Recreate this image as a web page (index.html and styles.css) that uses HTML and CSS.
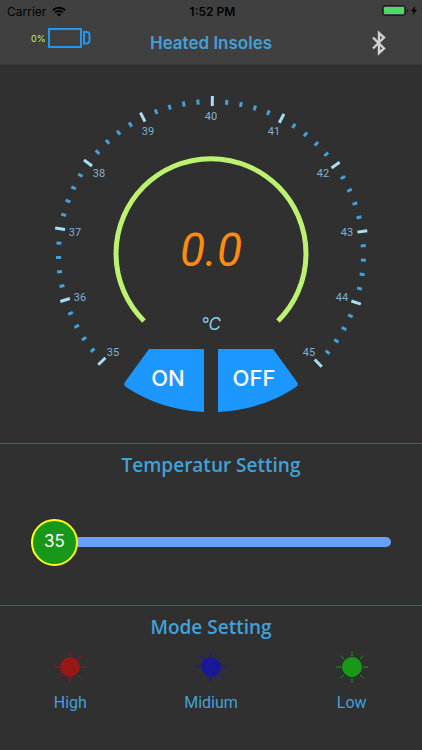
FILE: index.html
```html
<!DOCTYPE html>
<html lang="en">
<head>
    <meta charset="UTF-8">
    <meta name="viewport" content="width=device-width, initial-scale=1.0">
    <title>Heated Insoles</title>
    <link rel="stylesheet" href="styles.css">
</head>
<body>
    <header class="top">
        <div class="status-bar">
            <div class="carrier">
                Carrier
                <svg width="14" height="11" viewBox="0 0 14 11" fill="none" stroke="#000" stroke-width="2">
                    <path d="M1 4.2a8.6 8.6 0 0 1 12 0"/>
                    <path d="M3.2 6.6a5.4 5.4 0 0 1 7.6 0"/>
                    <path d="M7 10.6L4.9 8.4a3 3 0 0 1 4.2 0z" fill="#000" stroke="none"/>
                </svg>
            </div>
            <div class="clock">1:52 PM</div>
            <div class="power">
                <svg width="36" height="12" viewBox="0 0 36 12">
                    <rect x="0.5" y="0.5" width="23" height="10" rx="2.5" fill="none" stroke="#1c1c1c"/>
                    <rect x="2" y="2" width="20" height="7" rx="1" fill="#4cd964"/>
                    <path d="M25 4v3.4q1.4-.5 1.4-1.7T25 4z" fill="#1c1c1c"/>
                    <path d="M33.4 0.5L29 6.3h2.5L30.4 10.6 35 4.8h-2.6z" fill="#000"/>
                </svg>
            </div>
        </div>
        <div class="nav-bar">
            <div class="insole-battery">
                <span>0%</span>
                <svg width="44" height="20" viewBox="0 0 44 20" fill="none" stroke="#2196f3" stroke-width="2">
                    <rect x="1" y="1" width="32" height="18"/>
                    <path d="M36 4h2.500q3 0 3 3v5.500q0 3-3 3H36z"/>
                </svg>
            </div>
            <h1>Heated Insoles</h1>
            <button type="button" class="bluetooth" aria-label="Bluetooth">
                <svg width="14" height="26" viewBox="0 0 14 26" fill="none" stroke="#d0d0d0" stroke-width="2.4">
                    <path d="M1 7.500L12 18.500L7 23V3L12 7.500L1 18.500"/>
                </svg>
            </button>
        </div>
    </header>

    <main>
        <section class="gauge">
            <svg class="dial" viewBox="-160 -160 320 318">
                <g id="ticks"></g>
                <path class="arc" d="M-67 67A95 95 0 1 1 67 67"/>
                <text class="reading" x="0" y="12">0.0</text>
                <text class="unit" x="0" y="76">°C</text>
            </svg>
            <div class="power-buttons">
                <button type="button" class="power-btn on">ON</button>
                <button type="button" class="power-btn off">OFF</button>
            </div>
        </section>

        <section class="temperature">
            <h2><label for="temp">Temperatur Setting</label></h2>
            <div class="slider">
                <input type="range" id="temp" min="35" max="45" value="35">
                <output for="temp" id="temp-value">35</output>
            </div>
        </section>

        <section class="mode">
            <h2>Mode Setting</h2>
            <div class="modes">
                <button type="button" class="mode-btn high">
                    <svg width="32" height="32" viewBox="-16 -16 32 32"><use href="#sun"/></svg>
                    High
                </button>
                <button type="button" class="mode-btn medium">
                    <svg width="32" height="32" viewBox="-16 -16 32 32"><use href="#sun"/></svg>
                    Midium
                </button>
                <button type="button" class="mode-btn low">
                    <svg width="32" height="32" viewBox="-16 -16 32 32"><use href="#sun"/></svg>
                    Low
                </button>
            </div>
        </section>
    </main>

    <svg class="symbols" width="0" height="0">
        <defs>
            <g id="sun">
                <circle r="9.5"/>
                <path d="M0-11V-16M0 11V16M-11 0H-16M11 0H16M-8-8L-11.500-11.500M8-8L11.500-11.500M-8 8L-11.500 11.500M8 8L11.500 11.500"/>
            </g>
        </defs>
    </svg>

    <script src="script.js"></script>
</body>
</html>
```

FILE: styles.css
```css
* {
    margin: 0;
    padding: 0;
    box-sizing: border-box;
}

body {
    font-family: Inter, Roboto, sans-serif;
    background: #303030;
    color: #42a1d9;
    min-height: 100vh;
}

button {
    font-family: inherit;
    border: none;
    background: none;
    cursor: pointer;
}

svg {
    display: block;
}

.symbols {
    position: absolute;
}

/* Header */
.top {
    background: #404040;
    border-bottom: 1px solid #383838;
}

.status-bar {
    display: grid;
    grid-template-columns: 1fr auto 1fr;
    align-items: center;
    height: 22px;
    padding: 0 4px 0 7px;
    color: #000;
    font-size: 12px;
}

.carrier {
    display: flex;
    align-items: center;
    gap: 6px;
}

.clock {
    font-weight: 600;
}

.power {
    justify-self: end;
}

.nav-bar {
    display: grid;
    grid-template-columns: 1fr auto 1fr;
    align-items: center;
    height: 42px;
    padding: 0 31px;
}

.insole-battery {
    display: flex;
    align-items: center;
    gap: 2px;
    padding-bottom: 10px;
    font-size: 9px;
    color: #bdf271;
}

h1 {
    font-size: 17px;
    font-weight: 600;
}

.bluetooth {
    justify-self: end;
    padding-right: 5px;
}

/* Gauge */
.gauge {
    display: grid;
    justify-items: center;
    padding: 29px 16px 31px;
}

.dial, .power-buttons {
    grid-area: 1 / 1;
}

.dial {
    width: 100%;
    max-width: 320px;
}

.tick {
    stroke: #42a1d9;
    stroke-width: 3;
}

.tick.major {
    stroke: #a8def5;
}

.tick-label {
    fill: #7fb2cf;
    font-family: Roboto, sans-serif;
    font-size: 11px;
    text-anchor: middle;
}

.arc {
    fill: none;
    stroke: #bdf271;
    stroke-width: 5;
}

.reading {
    fill: #ff8c0f;
    font-family: Roboto, sans-serif;
    font-size: 46px;
    font-style: italic;
    text-anchor: middle;
}

.unit {
    fill: #87ceeb;
    font-size: 17px;
    font-style: italic;
    text-anchor: middle;
}

.power-buttons {
    display: flex;
    align-self: end;
    gap: 14px;
}

.power-btn {
    width: 80px;
    height: 63px;
    padding-bottom: 6px;
    background: #1c97ff;
    color: #fff;
    font-size: 22px;
    font-weight: 500;
}

.power-btn.on {
    padding-left: 8px;
    clip-path: path("M25 0H80V63C52 62 24 53 2 38Q-1 36 1 33Z");
}

.power-btn.off {
    padding-right: 8px;
    clip-path: path("M55 0H0V63C28 62 56 53 78 38Q81 36 79 33Z");
}

/* Settings */
.temperature, .mode {
    border-top: 1px solid #4d5c63;
    text-align: center;
}

h2 {
    padding-top: 8px;
    font-family: "Open Sans", sans-serif;
    font-size: 19px;
    font-weight: 600;
    line-height: 26px;
}

.temperature {
    padding-bottom: 40px;
}

.slider {
    position: relative;
    margin: 40px 31px 0;
    height: 47px;
}

.slider input {
    display: block;
    width: 100%;
    height: 47px;
    appearance: none;
    background: none;
}

.slider input::-webkit-slider-runnable-track {
    height: 10px;
    border-radius: 5px;
    background: #6b9ff5;
}

.slider input::-webkit-slider-thumb {
    appearance: none;
    width: 47px;
    height: 47px;
    margin-top: -18px;
    border: 2px solid #ffff1a;
    border-radius: 50%;
    background: #189818;
}

/* value shown on top of the thumb */
.slider output {
    position: absolute;
    top: 0;
    left: 0;
    width: 47px;
    line-height: 47px;
    color: #fff;
    font-size: 17px;
    pointer-events: none;
}

.modes {
    display: grid;
    grid-template-columns: repeat(3, 1fr);
    padding-top: 11px;
}

.mode-btn {
    display: flex;
    flex-direction: column;
    align-items: center;
    gap: 10px;
    color: #42a1d9;
    font-family: Roboto, sans-serif;
    font-size: 16px;
    line-height: 20px;
}

.mode-btn svg {
    stroke-width: 1;
}

.high svg {
    fill: #981818;
    stroke: #981818;
}

.medium svg {
    fill: #181898;
    stroke: #181898;
}

.low svg {
    fill: #189818;
    stroke: #189818;
}
```

FILE: script.js
```js
const MIN = 35;
const MAX = 45;
const SVG_NS = 'http://www.w3.org/2000/svg';
const ticks = document.getElementById('ticks');

// 270 degree scale, five steps for each degree Celsius
for (let i = 0; i <= (MAX - MIN) * 5; i++) {
    const angle = -135 + i * 5.4;
    const major = i % 5 === 0;
    const line = document.createElementNS(SVG_NS, 'line');
    line.setAttribute('class', major ? 'tick major' : 'tick');
    line.setAttribute('y1', major ? -158 : -155);
    line.setAttribute('y2', major ? -148 : -150);
    line.setAttribute('transform', `rotate(${angle + 0.5})`);
    ticks.appendChild(line);

    if (major) {
        const rad = angle * Math.PI / 180;
        const label = document.createElementNS(SVG_NS, 'text');
        label.setAttribute('class', 'tick-label');
        label.setAttribute('x', Math.round(Math.sin(rad) * 138));
        label.setAttribute('y', Math.round(-Math.cos(rad) * 138) + 4);
        label.textContent = MIN + i / 5;
        ticks.appendChild(label);
    }
}

// Keep the number centred on the slider thumb
const temp = document.getElementById('temp');
const value = document.getElementById('temp-value');

temp.addEventListener('input', () => {
    const ratio = (temp.value - MIN) / (MAX - MIN);
    value.textContent = temp.value;
    value.style.left = ratio * (temp.offsetWidth - 47) + 'px';
});
```
